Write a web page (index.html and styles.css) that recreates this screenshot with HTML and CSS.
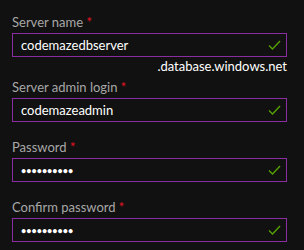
FILE: index.html
```html
<!DOCTYPE html>
<html lang="en">
  <head>
    <meta charset="UTF-8" />
    <title>Server settings</title>
    <link rel="stylesheet" href="styles.css">
  </head>
  <body>
    <form class="server-form">
      <div class="field field-suffixed">
        <label class="field-label">Server name <span class="required">*</span></label>
        <div class="field-box">
          <span class="field-value">codemazedbserver</span>
          <svg class="check" width="13" height="10" viewBox="0 0 13 10"><path d="M1 5.5 L4.5 9 L12 1" fill="none" stroke="#57a300" stroke-width="1.3"/></svg>
        </div>
        <div class="field-suffix">.database.windows.net</div>
      </div>

      <div class="field">
        <label class="field-label">Server admin login <span class="required">*</span></label>
        <div class="field-box">
          <span class="field-value">codemazeadmin</span>
          <svg class="check" width="13" height="10" viewBox="0 0 13 10"><path d="M1 5.5 L4.5 9 L12 1" fill="none" stroke="#57a300" stroke-width="1.3"/></svg>
        </div>
      </div>

      <div class="field">
        <label class="field-label">Password <span class="required">*</span></label>
        <div class="field-box">
          <span class="field-value secret">••••••••••</span>
          <svg class="check" width="13" height="10" viewBox="0 0 13 10"><path d="M1 5.5 L4.5 9 L12 1" fill="none" stroke="#57a300" stroke-width="1.3"/></svg>
        </div>
      </div>

      <div class="field">
        <label class="field-label">Confirm password <span class="required">*</span></label>
        <div class="field-box">
          <span class="field-value secret">••••••••••</span>
          <svg class="check" width="13" height="10" viewBox="0 0 13 10"><path d="M1 5.5 L4.5 9 L12 1" fill="none" stroke="#57a300" stroke-width="1.3"/></svg>
        </div>
      </div>
    </form>
  </body>
</html>
```

FILE: styles.css
```css
* {
  margin: 0;
  padding: 0;
  box-sizing: border-box;
  font-family: Lato, sans-serif;
}

body {
  background-color: #111111;
  color: #ffffff;
  width: 304px;
  height: 250px;
  overflow: hidden;
}

.server-form {
  display: flex;
  flex-direction: column;
  padding: 12px 17px 0 12px;
}

.field {
  display: flex;
  flex-direction: column;
  margin-bottom: 15px;
}

.field-suffixed {
  margin-bottom: 0;
}

.field-label {
  display: block;
  height: 21px;
  line-height: 20px;
  font-size: 13px;
  color: #a8a8a8;
}

.required {
  color: #e81123;
}

.field-box {
  display: flex;
  align-items: center;
  justify-content: space-between;
  height: 24px;
  padding: 0 5px 0 8px;
  border: 1px solid #8a2da0;
}

.field-value {
  font-size: 13px;
  color: #ffffff;
}

.secret {
  font-size: 9px;
  font-weight: bold;
}

.check {
  display: block;
}

.field-suffix {
  height: 20px;
  line-height: 18px;
  font-size: 13px;
  text-align: right;
  color: #ffffff;
}
```
